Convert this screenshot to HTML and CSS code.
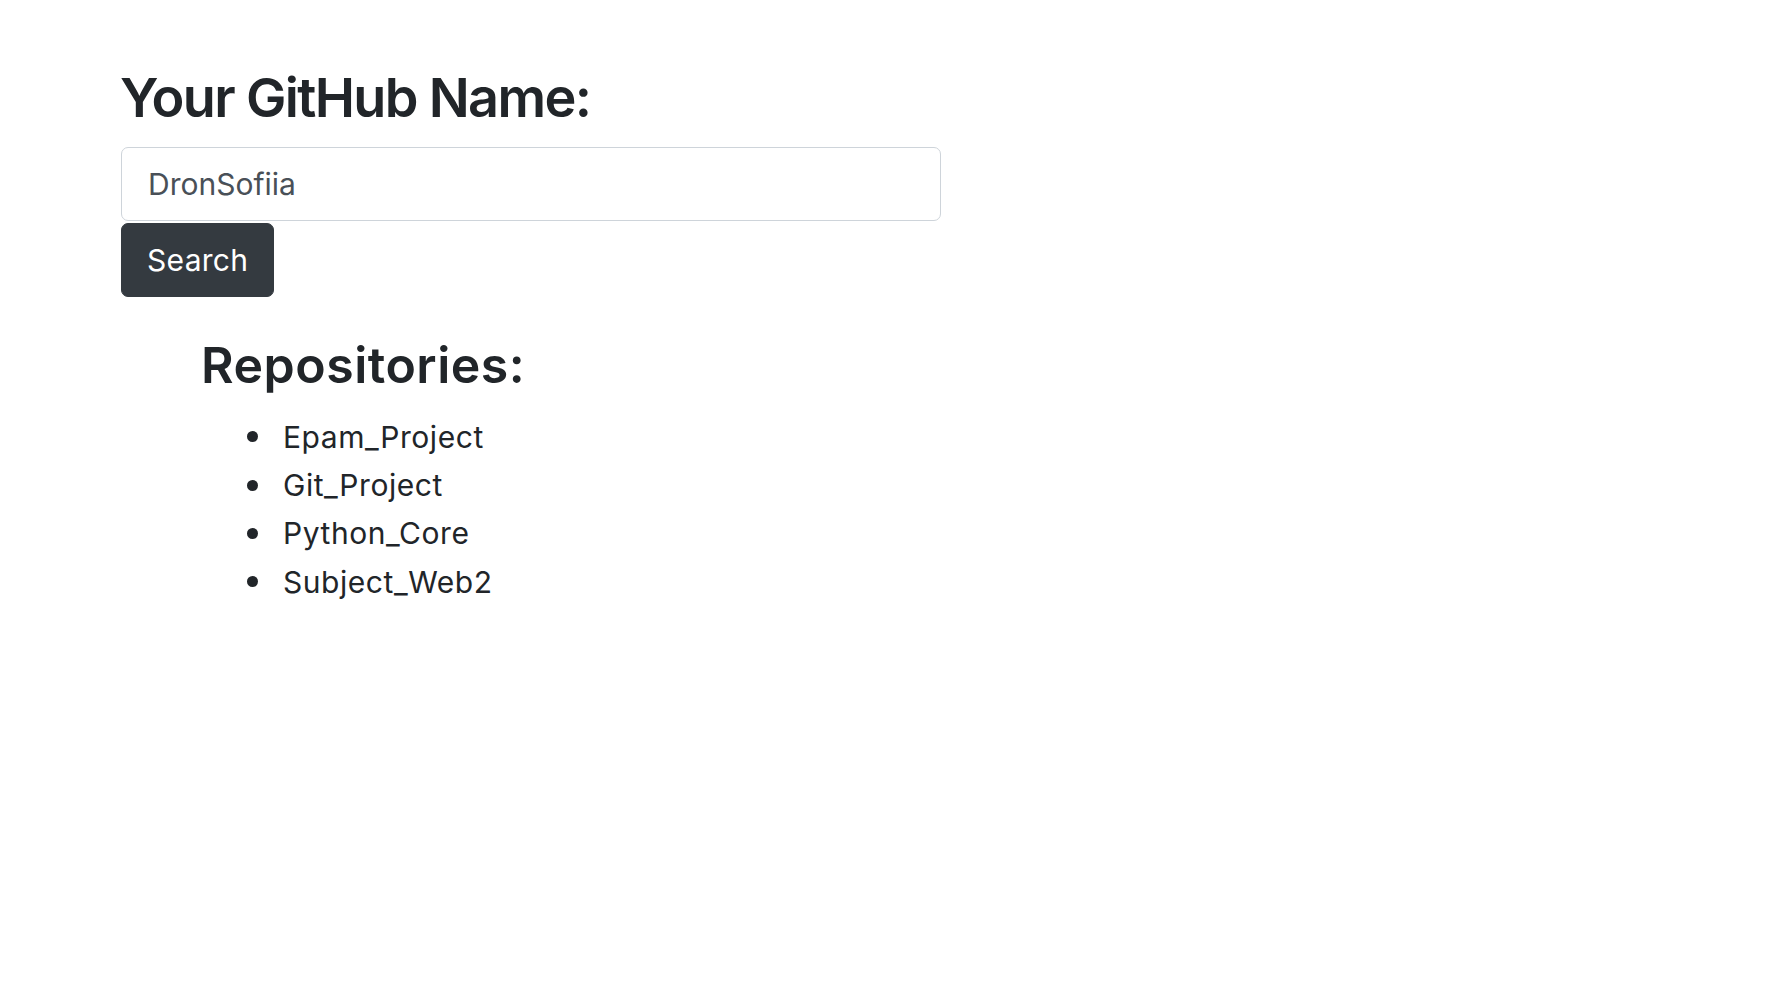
FILE: index.html
```html
<!DOCTYPE html>
<html lang="en">
<head>
<meta charset="utf-8">
<title>GitHub Repositories</title>
<link rel="stylesheet" href="styles.css">
</head>
<body>
<main class="page">
  <h1 class="title">Your GitHub Name:</h1>
  <form class="search-form">
    <input class="name-input" type="text" value="DronSofiia">
    <button class="search-btn" type="button">Search</button>
  </form>
  <section class="repos">
    <h2 class="repos-title">Repositories:</h2>
    <ul class="repo-list">
      <li class="repo-item">Epam_Project</li>
      <li class="repo-item">Git_Project</li>
      <li class="repo-item">Python_Core</li>
      <li class="repo-item">Subject_Web2</li>
    </ul>
  </section>
</main>
</body>
</html>
```

FILE: styles.css
```css
* { box-sizing: border-box; }

html, body {
  margin: 0;
  padding: 0;
  background: #ffffff;
}

body {
  font-family: Inter, "Noto Sans", "Liberation Sans", sans-serif;
  color: #212529;
}

.page {
  padding: 66px 0 0 120px;
}

.title {
  margin: 0 0 16px 0;
  font-size: 54px;
  font-weight: 600;
  line-height: 1.2;
  letter-spacing: -1.65px;
}

.search-form {
  display: flex;
  flex-direction: column;
  align-items: flex-start;
  padding-left: 1px;
}

.name-input {
  width: 820px;
  height: 74px;
  margin: 0;
  padding: 0 26px;
  border: 1.5px solid #ced4da;
  border-radius: 7px;
  font-family: inherit;
  font-size: 30px;
  color: #495057;
  background: #fff;
  outline: none;
}

.search-btn {
  margin-top: 2px;
  height: 74px;
  padding: 0 25px;
  border: 1px solid #343a40;
  border-radius: 7px;
  background: #343a40;
  color: #fff;
  font-family: inherit;
  font-size: 30px;
  font-weight: 400;
  letter-spacing: 0.3px;
  cursor: pointer;
}

.repos {
  margin-top: 38px;
  padding-left: 81px;
}

.repos-title {
  margin: 0;
  font-size: 50px;
  font-weight: 600;
  line-height: 1.2;
  letter-spacing: 0.5px;
}

.repo-list {
  list-style: none;
  margin: 18px 0 0 0;
  padding: 0 0 0 46px;
}

.repo-item {
  display: flex;
  align-items: center;
  gap: 25px;
  font-size: 30px;
  line-height: 48.3px;
  letter-spacing: 0.55px;
}

.repo-item::before {
  content: "";
  flex: none;
  width: 11px;
  height: 11px;
  border-radius: 50%;
  background: #212529;
}
```
